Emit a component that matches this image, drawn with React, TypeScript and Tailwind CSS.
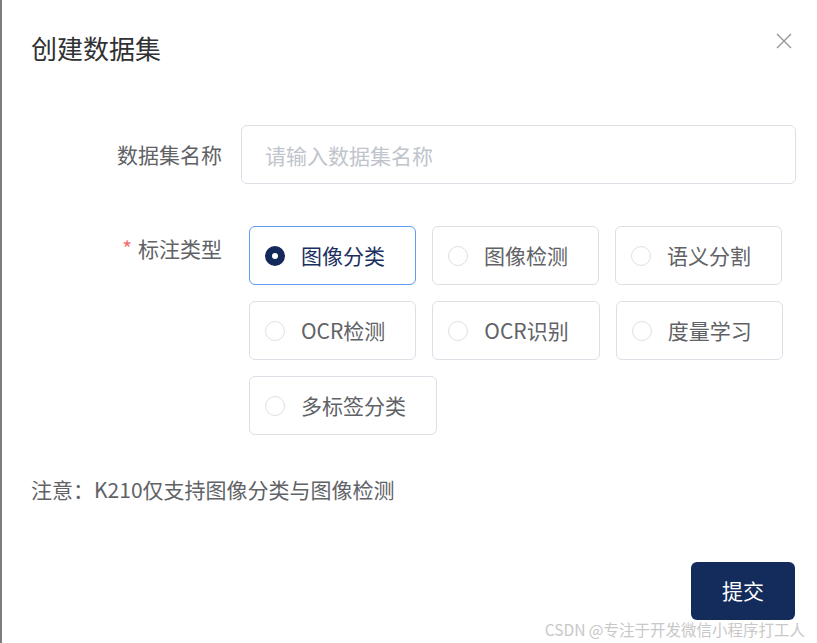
import React, { useState } from "react";

const types = ["图像分类", "图像检测", "语义分割", "OCR检测", "OCR识别", "度量学习", "多标签分类"];

const font = { fontFamily: '"Noto Sans CJK SC", "Noto Sans", sans-serif' };

const App: React.FC = () => {
  const [selected, setSelected] = useState("图像分类");

  return (
    <div
      className="relative flex h-[643px] w-[817px] flex-col overflow-hidden border-l-2 border-[#7d7d7d] bg-white"
      style={font}
    >
      {/* header */}
      <div className="pl-[29px] pt-[33px]">
        <h1 className="text-[26px] leading-[30px] font-normal text-[#303133]">创建数据集</h1>
      </div>
      <button className="absolute right-[25px] top-[33px] h-4 w-4 text-[#909399]" aria-label="关闭">
        <svg viewBox="0 0 16 16" width="16" height="16" fill="none" stroke="currentColor" strokeWidth="1.3">
          <path d="M1 1l14 14M15 1L1 15" />
        </svg>
      </button>

      {/* name */}
      <div className="mt-[62px] flex items-center">
        <label className="w-[220px] text-right text-[21px] text-[#606266]">数据集名称</label>
        <input
          className="ml-[19px] mr-[21px] h-[59px] flex-1 rounded-[6px] border border-[#dcdfe6] pl-[23px] text-[21px] text-[#606266] outline-none placeholder:text-[#c0c4cc]"
          placeholder="请输入数据集名称"
        />
      </div>

      {/* type */}
      <div className="mt-[42px] flex items-start">
        <label className="w-[220px] text-right text-[21px] leading-[44px] text-[#606266]">
          <span className="mr-[6px] text-[#f56c6c]">*</span>标注类型
        </label>
        <div className="ml-[27px] mr-[22px] flex flex-1 flex-wrap gap-4">
          {types.map((t) => {
            const on = t === selected;
            return (
              <button
                key={t}
                onClick={() => setSelected(t)}
                className={
                  "flex h-[59px] items-center rounded-[6px] border pl-[15px] pr-[30px] " +
                  (on ? "border-[#5c9cf5]" : "border-[#dcdfe6]")
                }
              >
                <span
                  className={
                    "flex h-5 w-5 items-center justify-center rounded-full " +
                    (on ? "bg-[#13295a]" : "border border-[#dcdfe6] bg-white")
                  }
                >
                  {on && <span className="h-[6px] w-[6px] rounded-full bg-white" />}
                </span>
                <span className={"ml-4 text-[21px] " + (on ? "text-[#1b2f5e]" : "text-[#606266]")}>{t}</span>
              </button>
            );
          })}
        </div>
      </div>

      {/* note */}
      <p className="mt-[40px] pl-[29px] text-[21px] leading-[28px] text-[#606266]">注意：K210仅支持图像分类与图像检测</p>

      {/* submit */}
      <div className="mt-[59px] flex justify-end pr-[22px]">
        <button className="h-[58px] w-[104px] rounded-[6px] bg-[#132c5b] text-[21px] text-white">提交</button>
      </div>

      <div className="absolute bottom-[5px] right-[12px] text-[15.5px] leading-[18px] text-[#c8c8c8]">
        CSDN @专注于开发微信小程序打工人
      </div>
    </div>
  );
};

export default App;
